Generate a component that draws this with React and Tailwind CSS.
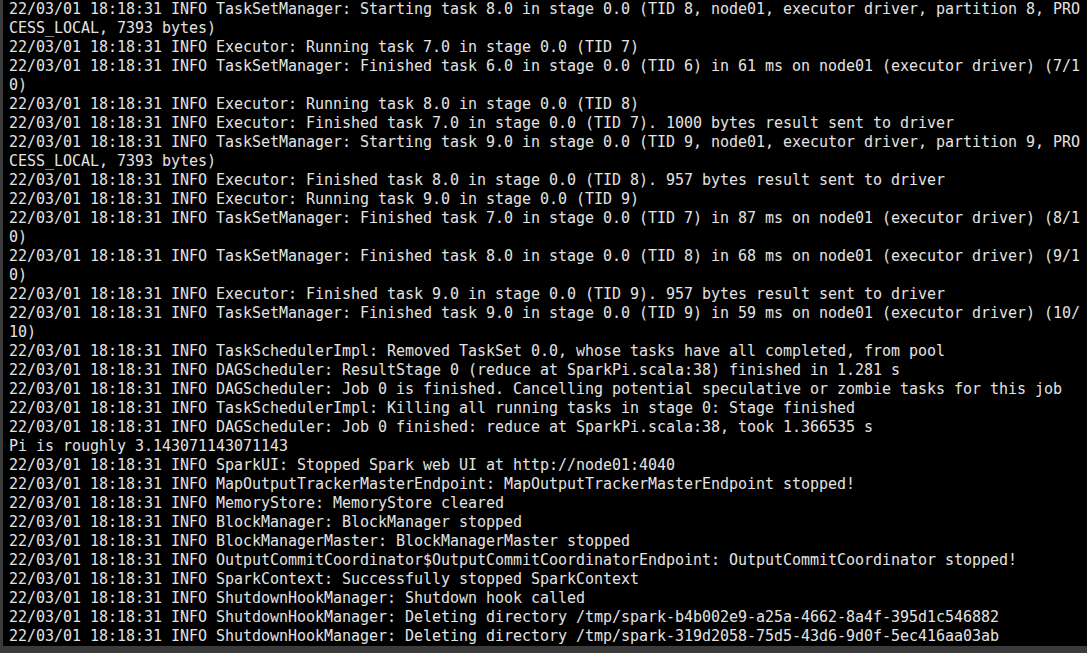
const ts = '22/03/01 18:18:31 INFO ';

// Lines as the terminal wrapped them (119 columns)
const lines = [
  ts + 'TaskSetManager: Starting task 8.0 in stage 0.0 (TID 8, node01, executor driver, partition 8, PRO',
  'CESS_LOCAL, 7393 bytes)',
  ts + 'Executor: Running task 7.0 in stage 0.0 (TID 7)',
  ts + 'TaskSetManager: Finished task 6.0 in stage 0.0 (TID 6) in 61 ms on node01 (executor driver) (7/1',
  '0)',
  ts + 'Executor: Running task 8.0 in stage 0.0 (TID 8)',
  ts + 'Executor: Finished task 7.0 in stage 0.0 (TID 7). 1000 bytes result sent to driver',
  ts + 'TaskSetManager: Starting task 9.0 in stage 0.0 (TID 9, node01, executor driver, partition 9, PRO',
  'CESS_LOCAL, 7393 bytes)',
  ts + 'Executor: Finished task 8.0 in stage 0.0 (TID 8). 957 bytes result sent to driver',
  ts + 'Executor: Running task 9.0 in stage 0.0 (TID 9)',
  ts + 'TaskSetManager: Finished task 7.0 in stage 0.0 (TID 7) in 87 ms on node01 (executor driver) (8/1',
  '0)',
  ts + 'TaskSetManager: Finished task 8.0 in stage 0.0 (TID 8) in 68 ms on node01 (executor driver) (9/1',
  '0)',
  ts + 'Executor: Finished task 9.0 in stage 0.0 (TID 9). 957 bytes result sent to driver',
  ts + 'TaskSetManager: Finished task 9.0 in stage 0.0 (TID 9) in 59 ms on node01 (executor driver) (10/',
  '10)',
  ts + 'TaskSchedulerImpl: Removed TaskSet 0.0, whose tasks have all completed, from pool',
  ts + 'DAGScheduler: ResultStage 0 (reduce at SparkPi.scala:38) finished in 1.281 s',
  ts + 'DAGScheduler: Job 0 is finished. Cancelling potential speculative or zombie tasks for this job',
  ts + 'TaskSchedulerImpl: Killing all running tasks in stage 0: Stage finished',
  ts + 'DAGScheduler: Job 0 finished: reduce at SparkPi.scala:38, took 1.366535 s',
  'Pi is roughly 3.143071143071143',
  ts + 'SparkUI: Stopped Spark web UI at http://node01:4040',
  ts + 'MapOutputTrackerMasterEndpoint: MapOutputTrackerMasterEndpoint stopped!',
  ts + 'MemoryStore: MemoryStore cleared',
  ts + 'BlockManager: BlockManager stopped',
  ts + 'BlockManagerMaster: BlockManagerMaster stopped',
  ts + 'OutputCommitCoordinator$OutputCommitCoordinatorEndpoint: OutputCommitCoordinator stopped!',
  ts + 'SparkContext: Successfully stopped SparkContext',
  ts + 'ShutdownHookManager: Shutdown hook called',
  ts + 'ShutdownHookManager: Deleting directory /tmp/spark-b4b002e9-a25a-4662-8a4f-395d1c546882',
  ts + 'ShutdownHookManager: Deleting directory /tmp/spark-319d2058-75d5-43d6-9d0f-5ec416aa03ab',
];

export default function App() {
  return (
    <div className="w-[1087px] h-[653px] bg-[#3b3b3b] flex flex-col overflow-hidden">
      <div className="flex-1 ml-[3px] bg-black pl-[6px] overflow-hidden">
        <div className="font-['DejaVu_Sans_Mono',monospace] text-[15px] leading-[19px] text-[#e3e3e3] whitespace-pre tracking-[-0.03px]">
          {lines.map((line, i) => (
            <div key={i} className="h-[19px]">{line}</div>
          ))}
        </div>
      </div>
      <div className="h-[7px] bg-[#3b3b3b]" />
    </div>
  );
}
